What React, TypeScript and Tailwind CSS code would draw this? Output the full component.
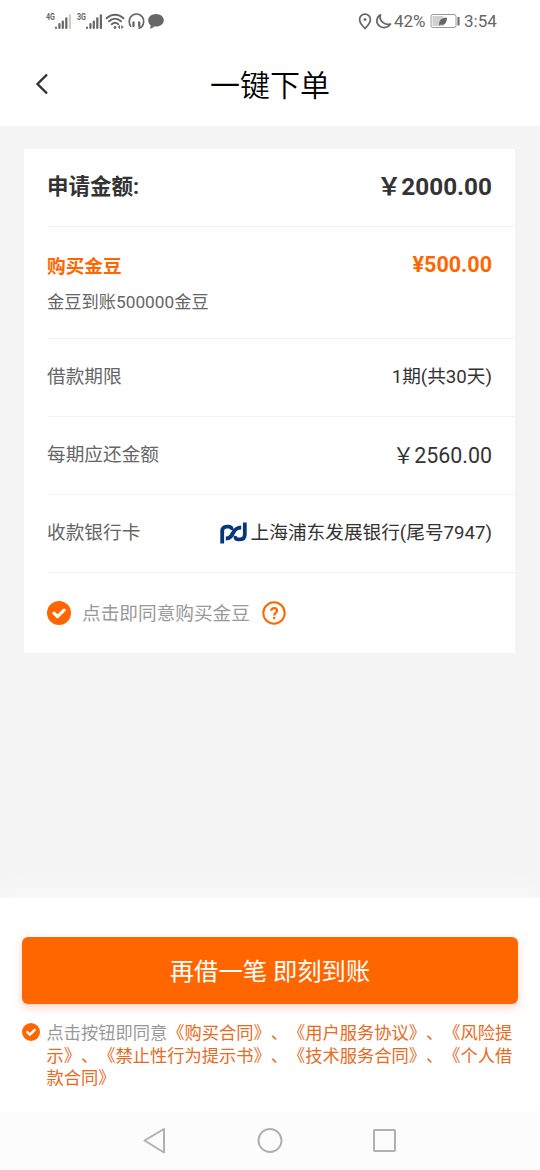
import type { ReactNode } from 'react';
import clsx from 'clsx';

const agreements = ['购买合同', '用户服务协议', '风险提示', '禁止性行为提示书', '技术服务合同', '个人借款合同'];

function CheckIcon({ className }: { className?: string }) {
    return (
        <svg viewBox="0 0 24 24" className={className}>
            <circle cx="12" cy="12" r="12" fill="#ff6600" />
            <path d="M7 12.2l3.5 3.4 6.6-6.4" fill="none" stroke="#fff" strokeWidth="3.2" strokeLinecap="round" strokeLinejoin="round" />
        </svg>
    );
}

function BankLogo() {
    return (
        <svg viewBox="0 0 27 22" className="mr-1 h-[22px] w-[27px]" fill="none" stroke="#06377b">
            <path d="M2.2 21.5V9.5C2.2 6.3 4 4.7 7 4.7h1.500c2.500 0 3.500 1.300 3 3.300" strokeWidth="3.8" />
            <path d="M24.8.5v12c0 3.200-1.800 4.800-4.800 4.800h-1.500c-2.500 0-3.500-1.300-3-3.300" strokeWidth="3.8" />
            <path d="M5.800 16.500c4.200 0 5.400-2.200 7.200-5.500s3.400-5.500 8.200-5.500" strokeWidth="4" />
        </svg>
    );
}

function Signal({ label, weak }: { label: string; weak?: boolean }) {
    return (
        <svg viewBox="0 0 26 20" className="h-5 w-[26px] shrink-0" fill="#666">
            <text x="0" y="9" fontSize="9" fontWeight="700" textLength="9" lengthAdjust="spacingAndGlyphs">
                {label}
            </text>
            <rect x="9" y="15.5" width="2" height="2.5" rx="1" />
            <rect x="12.3" y="12" width="2.2" height="6" rx="1" />
            <rect x="15.7" y="9.5" width="2.2" height="8.5" rx="1" />
            <rect x="19.2" y="6.2" width="2.2" height="11.8" rx="1" />
            <rect x="22.8" y="3.3" width="2.2" height="14.7" rx="1" fill={weak ? '#ccc' : '#666'} />
        </svg>
    );
}

function StatusBar() {
    return (
        <div className="flex h-[42px] items-center pr-[43px] pl-[46px] text-[#666]">
            <Signal label="4G" weak />
            <div className="w-[5px]" />
            <Signal label="3G" />
            {/* Wifi */}
            <svg viewBox="0 0 20 20" className="ml-0.5 h-5 w-5" fill="none" stroke="#666" strokeWidth="1.9" strokeLinecap="round">
                <path d="M1.5 7.3C6.5 2.5 13.5 2.5 18.5 7.3M4 10.3c3.6-3.4 8.4-3.4 12 0M6.7 13.2c2-1.8 4.6-1.8 6.6 0" />
                <circle cx="10" cy="16.5" r="1.4" fill="#666" stroke="none" />
                <path d="M15 14v4.2l-2.3-2.1zM16.3 14v4.2l2.3-2.1z" fill="#666" stroke="none" />
            </svg>
            {/* Headset */}
            <svg viewBox="0 0 18 20" className="ml-[3px] h-5 w-[18px]" fill="none" stroke="#666" strokeWidth="1.7" strokeLinecap="round">
                <path d="M2.800 15.200C.8 12.800.8 8.600 2.600 6 5.600 2 11.500 2 14.400 6c2 3 1.600 7.200-.6 9.600-.8.9-1.700 1.400-2.800 1.500" />
                <path d="M5.500 11.500v3.500M11.200 11.500v3.500" strokeWidth="2.300" />
            </svg>
            {/* Message */}
            <svg viewBox="0 0 18 18" className="ml-px h-[18px] w-[18px]" fill="#666">
                <path d="M9 2c4.4 0 7.8 2.8 7.8 6.3S13.4 14.6 9 14.6c-.7 0-1.4-.1-2-.2-1.2 1.4-2.600 2-4.200 2.100.7-.9 1-2 .8-3.300C2 12 1.200 10.300 1.200 8.300 1.200 4.800 4.600 2 9 2z" />
            </svg>
            <div className="flex-1" />
            {/* Location */}
            <svg viewBox="0 0 16 20" className="h-5 w-4" fill="none" stroke="#666" strokeWidth="1.7">
                <path d="M8 17.500C5 14.500 2.600 11.800 2.600 8.500a5.400 5.400 0 0 1 10.800 0c0 3.300-2.400 6-5.400 9z" />
                <circle cx="8" cy="8.600" r="1.4" fill="#666" stroke="none" />
            </svg>
            {/* Do not disturb */}
            <svg viewBox="0 0 18 20" className="ml-0.5 h-5 w-[18px]" fill="none" stroke="#666" strokeWidth="1.7" strokeLinejoin="round">
                <path d="M5.500 3.800C1 6.300.8 12.100 4.300 14.800c3.600 2.900 9 2 11.200-1.800-3 .9-6 .2-8-1.800-2.200-2-2.900-4.800-2-7.400z" />
            </svg>
            <span className="w-[33px] pt-0.5 pl-px text-[17px]">42%</span>
            {/* Battery */}
            <svg viewBox="0 0 30 16" className="ml-1 h-4 w-[30px]">
                <rect x="1" y="1.5" width="25" height="13" rx="2" fill="#fff" stroke="#999" strokeWidth="1" />
                <rect x="2.5" y="3" width="11" height="10" fill="#d0d0d0" />
                <path d="M9.300 12.500C8.500 7.500 11 5 17 4.500c-.2 5-2.200 8.500-6.300 7l-.9 1.300z" fill="#666" />
                <rect x="27.5" y="4" width="2" height="8.5" rx=".5" fill="#666" />
            </svg>
            <span className="ml-1 w-[33px] pt-0.5 text-[17px]">3:54</span>
        </div>
    );
}

function Row({ label, children }: { label: string; children: ReactNode }) {
    return (
        <div className={clsx('flex h-[78px] items-center justify-between border-b border-[#f3f3f3] pr-[23px] pb-px')}>
            <span className="-ml-px text-[18.67px] text-[#666]">{label}</span>
            {children}
        </div>
    );
}

export default function App() {
    return (
        <div className="flex h-[1170px] w-[540px] flex-col overflow-hidden bg-[#f4f4f4] font-[Roboto,'Noto_Sans_CJK_SC',sans-serif] text-[#333]">
            <header className="h-[126px] bg-white">
                <StatusBar />
                <div className="grid h-[84px] grid-cols-[54px_1fr_54px] items-center">
                    <svg viewBox="0 0 16 24" className="ml-[34px] h-6 w-4" fill="none" stroke="#333" strokeWidth="2.4">
                        <path d="M13 2.5L3.5 12l9.5 9.5" />
                    </svg>
                    <h1 className="pt-[3px] text-center text-[30px] font-[350] text-black">一键下单</h1>
                </div>
            </header>

            <main className="flex-1 pt-[23px]">
                <section className="ml-6 h-[504px] w-[491px] bg-white pl-6">
                    <div className="flex h-[78px] items-center justify-between border-b border-[#f3f3f3] pr-[23px] font-bold">
                        <span className="-ml-px text-[21.5px]">申请金额:</span>
                        <span className="text-[24.3px]">￥2000.00</span>
                    </div>

                    <div className="h-[112px] border-b border-[#f3f3f3] pt-6 pr-[23px]">
                        <div className="-ml-px flex h-8 items-center justify-between font-bold text-[#ff6600]">
                            <span className="text-[18.67px]">购买金豆</span>
                            <span className="pb-[3px] text-[21.5px]">¥500.00</span>
                        </div>
                        <p className="mt-[3px] -ml-px text-[17.25px] leading-8 text-[#666]">金豆到账500000金豆</p>
                    </div>

                    <Row label="借款期限">
                        <span className="text-[18.67px]">1期(共30天)</span>
                    </Row>
                    <Row label="每期应还金额">
                        <span className="pt-0.5 text-[21.4px]">￥2560.00</span>
                    </Row>
                    <Row label="收款银行卡">
                        <span className="flex items-center text-[18.67px]">
                            <BankLogo />
                            上海浦东发展银行(尾号7947)
                        </span>
                    </Row>

                    <div className="-ml-px flex h-20 items-center">
                        <CheckIcon className="h-6 w-6" />
                        <span className="ml-[11px] pt-0.5 text-[18.67px] text-[#999]">点击即同意购买金豆</span>
                        <svg viewBox="0 0 24 24" className="ml-3 h-6 w-6" fill="none" stroke="#ff6600" strokeWidth="2">
                            <circle cx="12" cy="12" r="10.7" />
                            <path d="M9.200 9.800C9.200 6.200 15 6.400 15 9.700c0 2-2.900 2.200-2.900 4.700" strokeWidth="2.3" />
                            <circle cx="12.1" cy="17" r="1.3" fill="#ff6600" stroke="none" />
                        </svg>
                    </div>
                </section>
            </main>

            <footer className="h-[213px] bg-white px-[22px] pt-[39px] shadow-[0_-8px_30px_rgba(255,255,255,0.6)]">
                <button className="h-[67px] w-full rounded-md bg-[#ff6600] pt-1 text-[24.3px] text-white shadow-[0_4px_9px_rgba(255,90,40,0.25)]">
                    再借一笔 即刻到账
                </button>
                <div className="mt-[18px] flex">
                    <CheckIcon className="mt-px h-[18px] w-[18px] shrink-0" />
                    <p className="ml-[6.5px] w-[468px] shrink-0 text-[17.25px] leading-[22.5px] text-[#e86a1c] [text-spacing-trim:space-all]">
                        <span className="text-[#999]">点击按钮即同意</span>
                        {agreements.map((name) => `《${name}》`).join('、')}
                    </p>
                </div>
            </footer>

            <nav className="h-[59px] bg-[#fcfcfc]">
                <svg viewBox="0 0 540 59" className="h-full w-full" fill="none" stroke="#b0b0b0" strokeWidth="2" strokeLinejoin="round">
                    <path d="M144.5 29.5L164 18v23.5z" />
                    <circle cx="270" cy="29.5" r="11.5" />
                    <rect x="374" y="19" width="21" height="21" rx="1" />
                </svg>
            </nav>
        </div>
    );
}
